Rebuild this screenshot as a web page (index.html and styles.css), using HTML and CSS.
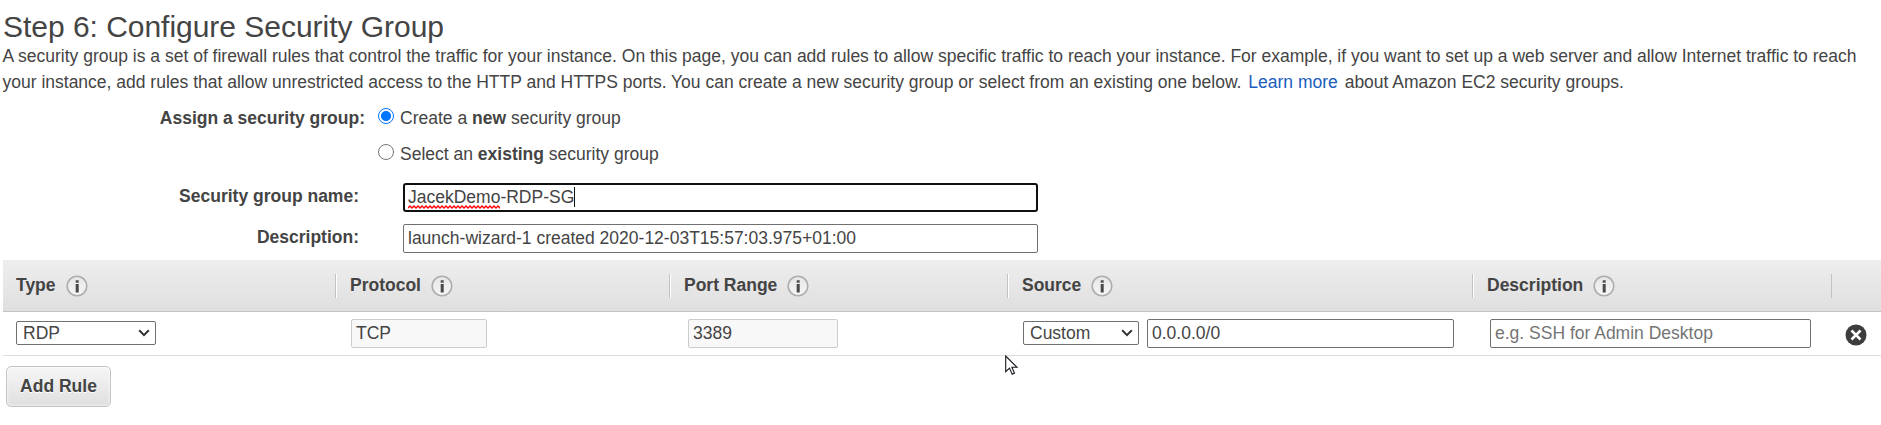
FILE: index.html
```html
<!DOCTYPE html>
<html lang="en">
<head>
<meta charset="utf-8">
<title>Configure Security Group</title>
<link rel="stylesheet" href="styles.css">
</head>
<body>
<svg width="0" height="0" class="defs" aria-hidden="true">
  <defs>
    <linearGradient id="info-fill" x1="0" y1="0" x2="0" y2="1"><stop offset="0" stop-color="#e6e6e6"/><stop offset="1" stop-color="#f6f6f6"/></linearGradient>
    <symbol id="info" viewBox="0 0 22 22">
      <circle cx="11" cy="11" r="9.8" fill="url(#info-fill)" stroke="#adadad" stroke-width="1.6"/>
      <rect x="9.7" y="5.2" width="3" height="2.6" fill="#555"/>
      <rect x="9.7" y="9" width="3" height="8.5" fill="#484848"/>
    </symbol>
    <symbol id="chevron" viewBox="0 0 12 8"><path d="M1.2 1.3 6 6.1l4.800-4.800" fill="none" stroke="#333" stroke-width="2"/></symbol>
  </defs>
</svg>
<main class="page">
  <h1 class="title">Step 6: Configure Security Group</h1>
  <p class="intro">A security group is a set of firewall rules that control the traffic for your instance. On this page, you can add rules to allow specific traffic to reach your instance. For example, if you want to set up a web server and allow Internet traffic to reach<br>your instance, add rules that allow unrestricted access to the HTTP and HTTPS ports. You can create a new security group or select from an existing one below. <a class="link">Learn more</a> about Amazon EC2 security groups.</p>

  <section class="assign">
    <div class="assign-label">Assign a security group:</div>
    <div class="choices">
      <label class="choice"><span class="radio radio-on"></span><span>Create a <b>new</b> security group</span></label>
      <label class="choice"><span class="radio"></span><span>Select an <b>existing</b> security group</span></label>
    </div>
  </section>
  <section class="fields">
    <div class="field-label">Security group name:</div>
    <div class="box focused"><span class="misspelled">JacekDemo<svg class="squiggle" width="92" height="4" viewBox="0 0 92 4"><path d="M0 3 l2-2 2 2 2-2 2 2 2-2 2 2 2-2 2 2 2-2 2 2 2-2 2 2 2-2 2 2 2-2 2 2 2-2 2 2 2-2 2 2 2-2 2 2 2-2 2 2 2-2 2 2 2-2 2 2 2-2 2 2 2-2 2 2 2-2 2 2 2-2 2 2 2-2 2 2 2-2 2 2 2-2 2 2 2-2 2 2 2-2 2 2 2-2 2 2" fill="none" stroke="#f00" stroke-width="1.4"/></svg></span>-RDP-SG<i class="caret"></i></div>
    <div class="field-label">Description:</div>
    <div class="box">launch-wizard-1 created 2020-12-03T15:57:03.975+01:00</div>
  </section>

  <section class="rules">
    <div class="row head">
      <div class="th">Type<svg class="info"><use href="#info"/></svg></div>
      <div class="th">Protocol<svg class="info"><use href="#info"/></svg></div>
      <div class="th">Port Range<svg class="info"><use href="#info"/></svg></div>
      <div class="th">Source<svg class="info"><use href="#info"/></svg></div>
      <div class="th">Description<svg class="info"><use href="#info"/></svg></div>
      <div class="th"></div>
    </div>
    <div class="row body">
      <div class="td type"><div class="select select-type">RDP<svg class="chevron"><use href="#chevron"/></svg></div></div>
      <div class="td protocol"><div class="box disabled">TCP</div></div>
      <div class="td port"><div class="box disabled">3389</div></div>
      <div class="td source"><div class="select select-source">Custom<svg class="chevron"><use href="#chevron"/></svg></div><div class="box source-box">0.0.0.0/0</div></div>
      <div class="td note"><div class="box placeholder">e.g. SSH for Admin Desktop</div></div>
      <div class="td remove"><svg width="22" height="22" viewBox="0 0 22 22"><circle cx="11" cy="11" r="10.500" fill="#3d3d3d"/><path d="M6.500 6.500l9 9m0-9l-9 9" stroke="#fff" stroke-width="2.600"/></svg></div>
    </div>
  </section>
  <button class="add">Add Rule</button>
</main>
<svg class="pointer" width="14" height="21" viewBox="0 0 14 21"><path d="M.7 1v15.700l3.800-3.600 2.700 6.200 2.300-1-2.600-6h5.100z" fill="#fff" stroke="#181820" stroke-width="1.100"/></svg>
</body>
</html>
```
FILE: styles.css
```css
* { box-sizing: border-box; }
body {
  margin: 0;
  width: 1881px;
  height: 425px;
  overflow: hidden;
  background: #fff;
  color: #444;
  font: 17.5px/26px "Liberation Sans", Arial, sans-serif;
}
.defs { position: absolute; }
.page { padding: 10px 0 0 3px; }
.title { margin: 0; font-size: 30px; font-weight: 400; line-height: 33px; letter-spacing: -0.03px; }
.intro { margin: 0 0 0 -0.5px; white-space: nowrap; }
.link { color: #1a5dbd; margin: 0 2px; }

.assign { display: grid; grid-template-columns: 362px 1fr; column-gap: 13px; padding-top: 10px; }
.assign-label, .field-label { font-weight: 700; text-align: right; }
.choices { display: flex; flex-direction: column; gap: 10px; }
.choice { display: flex; gap: 6px; }
.radio { width: 16px; height: 16px; margin-top: 3px; border: 1px solid #767676; border-radius: 50%; }
.radio-on { border: 1.5px solid #0075ff; background: radial-gradient(circle, #0075ff 4.600px, #fff 5.400px); }

.fields { display: grid; grid-template-columns: 356px 635px; column-gap: 44px; row-gap: 12px; padding-top: 16px; }
.field-label { line-height: 27px; }
.box {
  height: 29px;
  border: 1px solid #707070;
  border-radius: 2px;
  padding: 0 4px;
  line-height: 27px;
  white-space: nowrap;
}
.focused { border: 2px solid #101010; border-radius: 3px; padding: 0 3px; line-height: 25px; }
.misspelled { position: relative; }
.squiggle { position: absolute; left: 0; bottom: -2px; }
.caret { display: inline-block; width: 1px; height: 20px; background: #111; vertical-align: -4px; }

.rules { padding-top: 7px; }
.row { display: grid; grid-template-columns: 332px 334px 338px 465px 359px 50px; }
.head { height: 52px; background: linear-gradient(#eee, #dfdfdf); border-bottom: 1px solid #c4c4c4; }
.th { display: flex; align-items: flex-start; gap: 10px; height: 24px; margin-top: 14px; padding-left: 13px; font-weight: 700; line-height: 23px; }
.th + .th { border-left: 1px solid #c2c2c2; box-shadow: inset 1px 0 #fff; padding-left: 14px; }
.th:last-child { box-shadow: none; }
.info { width: 22px; height: 22px; margin-top: 1px; }
.body { height: 44px; border-bottom: 1px solid #ddd; }
.td { display: flex; padding-top: 7px; }
.type { padding-left: 13px; }
.protocol { padding-left: 16px; }
.protocol .box { width: 136px; }
.port { padding-left: 19px; }
.port .box { width: 150px; }
.source { padding-left: 16px; gap: 8px; }
.source-box { width: 307px; }
.note { padding-left: 18px; }
.note .box { width: 321px; }
.remove { padding: 12px 0 0 14px; }
.disabled { background: #f8f8f8; border-color: #ccc; }
.placeholder { color: #757575; }
.select {
  display: flex;
  justify-content: space-between;
  align-items: center;
  height: 24px;
  margin-top: 2px;
  padding: 0 5px 0 6px;
  border: 1px solid #707070;
  border-radius: 2px;
}
.select-type { width: 140px; }
.select-source { width: 116px; }
.chevron { width: 12px; height: 8px; }
.add {
  display: block;
  width: 105px;
  height: 41px;
  margin: 10px 0 0 3px;
  padding: 0;
  border: 1px solid #c4c4c4;
  border-radius: 5px;
  background: linear-gradient(#f6f6f6, #dfdfdf);
  box-shadow: inset 0 0 3px #fff;
  color: #444;
  font: 700 17.5px "Liberation Sans", Arial, sans-serif;
  text-shadow: 0 1px #fff;
}
.pointer { position: absolute; left: 1005px; top: 355px; }
```
